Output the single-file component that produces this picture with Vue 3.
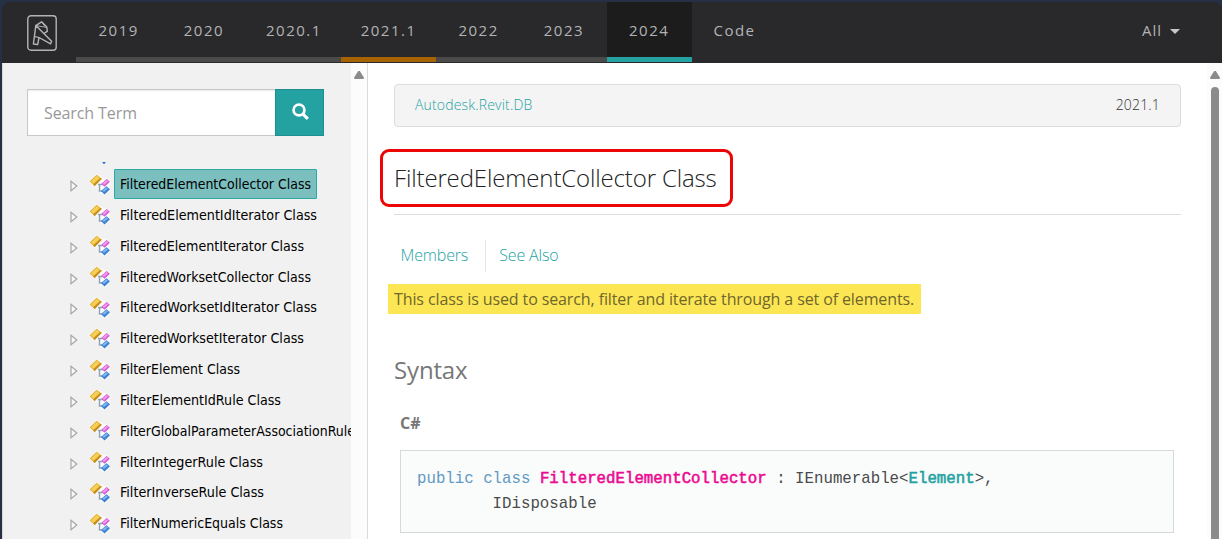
<script setup>
const tabs = [
  { label: '2019', kind: 'gray' },
  { label: '2020', kind: 'gray' },
  { label: '2020.1', kind: 'gray wide' },
  { label: '2021.1', kind: 'orange wide' },
  { label: '2022', kind: 'gray' },
  { label: '2023', kind: 'gray' },
  { label: '2024', kind: 'active' },
  { label: 'Code', kind: 'plain' },
]

const nodes = [
  { name: 'FilteredElementCollector Class', width: 191, selected: true },
  { name: 'FilteredElementIdIterator Class', width: 197 },
  { name: 'FilteredElementIterator Class', width: 184 },
  { name: 'FilteredWorksetCollector Class', width: 191 },
  { name: 'FilteredWorksetIdIterator Class', width: 197 },
  { name: 'FilteredWorksetIterator Class', width: 184 },
  { name: 'FilterElement Class', width: 120 },
  { name: 'FilterElementIdRule Class', width: 161 },
  { name: 'FilterGlobalParameterAssociationRule Class', width: 272 },
  { name: 'FilterIntegerRule Class', width: 143 },
  { name: 'FilterInverseRule Class', width: 144 },
  { name: 'FilterNumericEquals Class', width: 163 },
]
</script>

<template>
  <div class="window">
    <header class="topbar">
      <svg class="logo" width="30" height="36" viewBox="0 0 30 36" fill="none" stroke="#b4b4b6" stroke-linejoin="round">
        <rect x="0.8" y="0.8" width="28.4" height="34.4" rx="3.2" stroke-width="1.4" />
        <path d="M8.8 10.6 14.6 6.8 19.8 12 20.3 16.4 17.4 18.2" stroke-width="1.4" />
        <path d="M8.8 10.6 6.4 29 10.7 29.5 12 22.5 23.6 28.8 24.6 26.2 8.8 10.6Z" stroke-width="1.4" />
        <path d="M8.8 10.6 19.8 12.4 M14.6 6.8 18 11.5" stroke-width=".9" />
        <path d="M8 21.6 12 22.5" stroke-width="1.2" />
      </svg>
      <nav class="tabs">
        <a v-for="t in tabs" :key="t.label" class="tab" :class="t.kind">{{ t.label }}</a>
      </nav>
      <div class="all">All<i class="caret"></i></div>
    </header>

    <div class="body">
      <aside class="side">
        <div class="search">
          <div class="field">Search Term</div>
          <div class="go">
            <svg width="18" height="18" viewBox="0 0 18 18" fill="none" stroke="#fff">
              <circle cx="7" cy="7" r="5.4" stroke-width="2.7" />
              <path d="M11 11.2 15.8 15.8" stroke-width="3.1" />
            </svg>
          </div>
        </div>
        <div class="clip"><svg width="6" height="3" viewBox="0 0 6 3"><path d="M0.5 0H5.5L3 2.6Z" fill="#fff" /><path d="M1 0H5L3 2.2Z" fill="#2f6fc8" /></svg></div>
        <ul class="tree">
          <li v-for="n in nodes" :key="n.name" class="node">
            <svg class="arrow" width="8" height="12" viewBox="0 0 8 12"><path d="M1 1.3V10.7L6.8 6Z" fill="#f8f8f8" stroke="#a6a6a6" stroke-width="1.2" /></svg>
            <svg class="icon" width="22" height="22" viewBox="0 0 22 22">
              <path d="M0 8 7.5 0l6 3.5 3 .5 5 3-1 5v4l-4.500 5.500-5.500-3-2.500-6-4-1Z" fill="#fff" opacity=".7" />
              <path d="M9 10.500H16M10.500 10.500V17H14" fill="none" stroke="#8fa3b6" stroke-width="1.500" />
              <path d="M0.600 7.600 7.700 0.700 12.800 4.800 5.700 11.900Z" fill="#e2ac28" />
              <path d="M1.900 7.500 7.800 1.800 10.500 4 4.600 9.700Z" fill="#f5cf58" />
              <path d="M4.200 10.600 5.700 11.900 12.800 4.800 11.700 3.900Z" fill="#c38c20" />
              <path d="M12.300 9.700 17.700 4.900 20.900 7.700 15.600 12.700Z" fill="#d65bd3" />
              <path d="M13.500 9.600 17.700 5.900 19.200 7.200 15.100 10.900Z" fill="#f09bed" />
              <path d="M12 16.900 17.500 12.300 20.900 15.200 15.500 20.500Z" fill="#397ed3" />
              <path d="M13.300 16.600 17.500 13.200 19.100 14.500 15 18.100Z" fill="#7eb8f2" />
            </svg>
            <span class="name" :class="{ selected: n.selected }">
              <svg :width="n.width" height="20"><text x="0" y="15" :textLength="n.width" lengthAdjust="spacingAndGlyphs">{{ n.name }}</text></svg>
            </span>
          </li>
        </ul>
      </aside>
      <div class="track"><i class="up"></i></div>

      <main class="content">
        <div class="crumbs"><a>Autodesk.Revit.DB</a><span>2021.1</span></div>
        <div class="heading">
          <h1>FilteredElementCollector Class</h1>
          <div class="frame"></div>
        </div>
        <div class="links"><a>Members</a><a>See Also</a></div>
        <p class="summary">This class is used to search, filter and iterate through a set of elements.</p>
        <h2>Syntax</h2>
        <h3>C#</h3>
        <pre class="code"><span class="kw">public class </span><b class="type">FilteredElementCollector</b> : IEnumerable&lt;<b class="ref">Element</b>&gt;,
        IDisposable</pre>
      </main>
      <div class="track main"><i class="up"></i><i class="thumb"></i></div>
    </div>
  </div>
</template>

<style>
body { background: #263044; overflow: hidden; }
</style>

<style scoped>
* { box-sizing: border-box; }
.window { width: 1222px; height: 539px; padding: 2px 0 0 2px; overflow: hidden; display: flex; flex-direction: column; background: #263044; font-family: "Open Sans", "Noto Sans", sans-serif; }
.topbar { height: 61px; flex: none; display: flex; background: #29292b; border-radius: 8px 8px 0 0; }
.logo { margin: 13px 0 0 25px; width: 30px; height: 36px; flex: none; }
.tabs { display: flex; margin-left: 19px; height: 60px; }
.tab { width: 85.3px; height: 60px; text-align: center; font-size: 15px; letter-spacing: 1.5px; line-height: 57px; color: #b3b3b5; border-bottom: 5px solid transparent; }
.tab.wide { width: 94.7px; }
.tab.gray { border-color: #4b4a4b; }
.tab.orange { border-color: #a66300; }
.tab.active { background: #1c1c1c; border-color: #24a2a2; }
.all { margin: 0 42px 0 auto; display: flex; align-items: center; height: 56px; font-size: 15px; letter-spacing: 1px; color: #b3b3b5; }
.caret { margin: 3px 0 0 8px; border: 5px solid transparent; border-top-color: #c8c8c8; border-bottom: 0; }
.body { flex: 1; min-height: 0; display: flex; background: #fff; }
.side { width: 349px; flex: none; overflow: hidden; background: #f1f1f1; border-left: 1px solid #d9d9d9; }
.search { display: flex; margin: 26px 0 0 24px; height: 47px; width: 297px; }
.field { flex: 1; padding-left: 16px; background: #fff; border: 1px solid #c8c8c8; border-right: 0; box-shadow: inset 0 1px 1px rgba(0,0,0,.08); font-size: 16px; letter-spacing: -.1px; line-height: 46px; color: #999; }
.go { width: 49px; padding: 13px 0 0 16px; background: #24a2a2; border: 1px solid #1e8e8e; }
.clip { height: 3px; margin: 26px 0 4px 98px; }
.clip svg { display: block; }
.tree { list-style: none; margin: 0; padding: 0 0 0 67px; }
.node { display: flex; height: 30.85px; }
.arrow { margin-top: 11px; flex: none; }
.icon { margin: 4.5px 0 0 11px; flex: none; }
.name { height: 30px; margin-left: 3px; padding: 4px 5px; border: 1px solid transparent; border-radius: 1px; flex: none; }
.name.selected { background: #7bbfbe; border-color: #2ba9a5; }
.name svg { display: block; }
.name text { font-family: "DejaVu Sans Condensed", "DejaVu Sans", sans-serif; font-stretch: condensed; font-size: 13.5px; fill: #000; }
.track { width: 17px; flex: none; background: #fcfcfc; border-right: 1px solid #dadada; padding: 8px 0 0 3px; }
.up { display: block; width: 10px; height: 8px; background: #8b8b8b; clip-path: polygon(42% 0, 58% 0, 100% 85%, 96% 100%, 4% 100%, 0 85%); }
.content { width: 839px; flex: none; padding: 21px 26px 0 26px; overflow: hidden; }
.crumbs { display: flex; justify-content: space-between; height: 43px; padding: 0 20px; border: 1px solid #dcdcdc; border-radius: 4px; background: #f4f4f4; font-size: 14px; letter-spacing: .17px; line-height: 40px; font-weight: 300; color: #333; }
.crumbs a { color: #24a2a2; }
.heading { position: relative; height: 88px; border-bottom: 1px solid #dcdcdc; }
h1 { margin: 0; padding-top: 34px; font-size: 24px; letter-spacing: -.14px; line-height: 34px; font-weight: 300; color: #222; white-space: nowrap; }
.frame { position: absolute; left: -14px; top: 22px; width: 353px; height: 58px; border: 3px solid #eb0505; border-radius: 9px; }
.links { display: flex; height: 32px; margin-top: 25px; font-size: 16px; letter-spacing: -.15px; line-height: 30px; font-weight: 300; color: #24a2a2; }
.links a { padding: 0 17px 0 6.500px; }
.links a + a { border-left: 1px solid #e5e5e5; padding-left: 13px; }
.summary { width: 533px; height: 30px; margin: 12px 0 0 -6px; padding-left: 6px; background: #fde653; font-size: 16px; letter-spacing: -.11px; line-height: 31px; color: #6f672e; white-space: nowrap; }
h2 { margin: 39px 0 0; font-size: 24px; letter-spacing: -.15px; line-height: 34px; font-weight: 400; color: #777; }
h3 { margin: 24px 0 0 6px; font-size: 16px; line-height: 24px; font-weight: 700; color: #777; }
.code { width: 774px; height: 83px; margin: 15px 0 0 6px; padding: 16px 16px; border: 1px solid #d6d9d9; background: #fafcfc; font-family: "Liberation Mono", monospace; font-size: 15.76px; line-height: 25px; color: #4a4a4a; }
.kw { color: #6099c2; }
.code b { font-weight: 400; }
.type { color: #ec0a91; -webkit-text-stroke: .55px #ec0a91; }
.ref { color: #24a2a2; -webkit-text-stroke: .55px #24a2a2; }
.track.main { width: 15px; border: 0; padding-left: 3px; }
.thumb { display: block; width: 8px; height: 470px; margin: 8px 0 0 1px; border-radius: 4px 4px 0 0; background: #8b8b8b; }
</style>
